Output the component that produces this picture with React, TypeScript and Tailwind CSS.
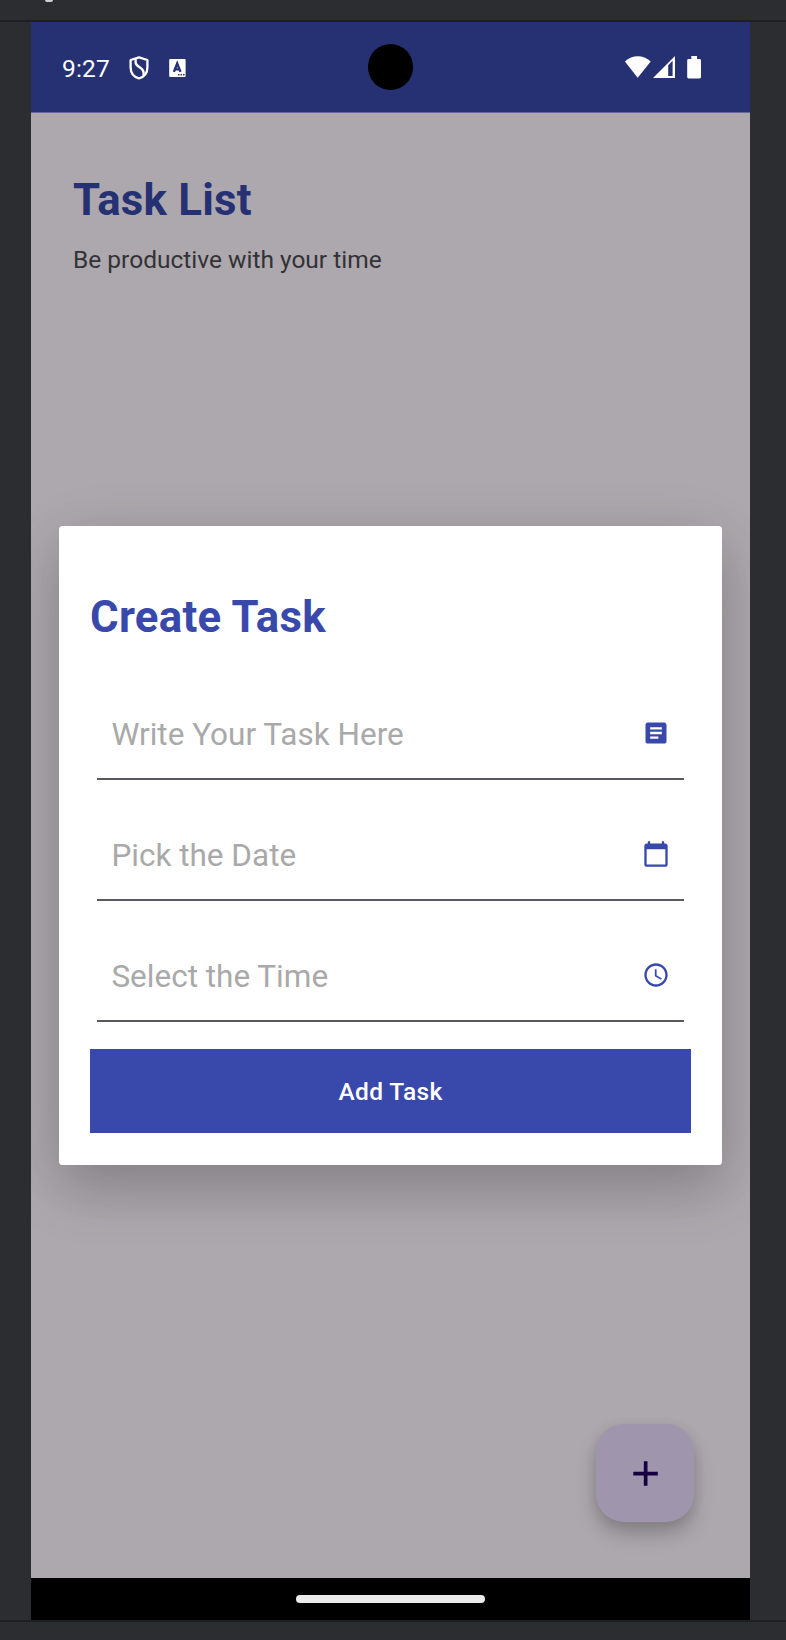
import type { ReactNode } from "react";

function ShieldIcon() {
  return (
    <svg className="absolute top-[34px] left-[98px]" width="20" height="24" viewBox="0 0 20 24" fill="none" stroke="#fff" strokeWidth="2.3">
      <path d="M10 1.4 L18.4 4 V11.2 C18.4 17.2 14.8 21 10 22.4 C5.2 21 1.6 17.2 1.6 11.2 V4 Z" strokeLinejoin="round" />
      <path d="M6.6 3 V6.2 C6.6 11.6 14.6 11 14.6 16.4 V19.4" />
    </svg>
  );
}

function KeyboardIcon() {
  return (
    <svg className="absolute top-[37px] left-[138px]" width="17" height="18" viewBox="0 0 17 18">
      <rect x="0.2" y="0" width="16.4" height="18" rx="1" fill="#fff" />
      <path d="M4.9 12.9 L8.2 4.6 L11.5 12.9 M6 10.4 H10.4" fill="none" stroke="#263173" strokeWidth="2.4" />
      <path d="M9 15.8 H10.5 M11.5 15.8 H13 M14 15.8 H15.5" stroke="#263173" strokeWidth="1.4" />
    </svg>
  );
}

function StatusBar() {
  return (
    <header className="relative h-[91px] shrink-0 border-b border-[#67669b] bg-[#263173] text-white">
      <span className="absolute top-[32px] left-[31px] text-[24.5px] leading-[29px] tracking-[0.2px] whitespace-nowrap">9:27</span>
      <ShieldIcon />
      <KeyboardIcon />
      <div className="absolute top-[22.2px] left-[337px] size-[45.4px] rounded-full bg-black" />
      <svg className="absolute top-[33px] left-[593px]" width="80" height="25" viewBox="0 0 80 25">
        <path d="M13.7 22.8 L0.9 6.5 C8.2 -0.5 19.2 -0.5 26.7 6.5 Z" fill="#fff" />
        <path d="M29 23 L51 1 V23 Z" fill="#fff" />
        <path d="M44.2 10.2 L48.6 5.8 V20.9 H44.2 Z" fill="#263173" />
        <path d="M67.3 1 H73 V4 H75.6 Q77 4 77 5.4 V22.1 Q77 23.5 75.6 23.5 H64.6 Q63.2 23.5 63.2 22.1 V5.4 Q63.2 4 64.6 4 H67.3 Z" fill="#fff" />
      </svg>
    </header>
  );
}

function FieldIcon({ d }: { d: string }) {
  return (
    <svg width="28" height="28" viewBox="0 0 24 24" fill="#3949ab">
      <path d={d} />
    </svg>
  );
}

const ARTICLE =
  "M19 3H5c-1.1 0-2 .9-2 2v14c0 1.1.9 2 2 2h14c1.1 0 2-.9 2-2V5c0-1.1-.9-2-2-2zm-5 14H7v-2h7v2zm3-4H7v-2h10v2zm0-4H7V7h10v2z";
const CALENDAR =
  "M20 3h-1V1h-2v2H7V1H5v2H4c-1.1 0-2 .9-2 2v16c0 1.1.9 2 2 2h16c1.1 0 2-.9 2-2V5c0-1.1-.9-2-2-2zm0 18H4V8h16v13z";
const CLOCK =
  "M11.99 2C6.47 2 2 6.48 2 12s4.47 10 9.99 10C17.52 22 22 17.52 22 12S17.52 2 11.99 2zM12 20c-4.42 0-8-3.58-8-8s3.58-8 8-8 8 3.58 8 8-3.58 8-8 8zm.5-13H11v6l5.25 3.15.75-1.23-4.5-2.67z";

function Field({ label, children }: { label: string; children: ReactNode }) {
  return (
    <div className="mx-[7px] flex h-[121px] items-end justify-between border-b-2 border-[#5c5861] pr-[14.5px] pl-[14.4px]">
      <span className="pb-[24.5px] text-[31.5px] leading-[38px] whitespace-nowrap text-[#a9a9a9]">{label}</span>
      <span className="pb-[31.5px]">{children}</span>
    </div>
  );
}

function TaskDialog() {
  return (
    <section className="absolute top-[504px] left-[28px] h-[638.5px] w-[663px] rounded-[3.5px] bg-white px-[31px] shadow-[0_26px_56px_rgba(0,0,0,0.19),0_6px_64px_rgba(0,0,0,0.07)]">
      <h2 className="pt-[65px] text-[43.75px] leading-[52px] font-bold tracking-[0.3px] text-[#3949ab]">Create Task</h2>
      <div className="mt-[16px]">
        <Field label="Write Your Task Here">
          <FieldIcon d={ARTICLE} />
        </Field>
        <Field label="Pick the Date">
          <FieldIcon d={CALENDAR} />
        </Field>
        <Field label="Select the Time">
          <FieldIcon d={CLOCK} />
        </Field>
      </div>
      <button className="mt-[27px] flex h-[84px] w-[601px] items-center justify-center bg-[#3949ab] pt-[3px] text-[24.5px] font-medium tracking-[0.35px] text-white">
        Add Task
      </button>
    </section>
  );
}

export default function App() {
  return (
    <div className="flex h-[1640px] w-[786px] flex-col overflow-hidden bg-[#2b2d30] font-[Roboto,sans-serif]">
      <div className="h-[22px] shrink-0 border-b-2 border-[#1e1f22] pl-[45px]">
        <div className="h-[2px] w-[8px] rounded-b-full bg-[#ced0d6]" />
      </div>
      <div className="relative ml-[31px] flex h-[1598px] w-[719px] shrink-0 flex-col overflow-hidden bg-[#ada8ad]">
        <StatusBar />
        <main className="flex-1 pl-[42px]">
          <h1 className="pt-[61px] text-[43.75px] leading-[52px] font-bold tracking-[0.25px] text-[#263173]">Task List</h1>
          <p className="mt-[19px] text-[24.5px] leading-[29px] text-[#333236]">Be productive with your time</p>
        </main>
        <TaskDialog />
        <button
          aria-label="Add"
          className="absolute top-[1402px] left-[565px] flex size-[98px] items-center justify-center rounded-[28px] bg-[#9f96ad] shadow-[0_12px_20px_rgba(0,0,0,0.22),0_2px_12px_rgba(0,0,0,0.07)]"
        >
          <svg width="25" height="25" viewBox="0 0 25 25" fill="#16003f">
            <path d="M10.8 0.3h3.7v10.5h10.3v3.7H14.5v10.3h-3.7V14.5H0.3v-3.7h10.5z" />
          </svg>
        </button>
        <nav className="flex h-[42px] shrink-0 items-start justify-center bg-black pt-[17.3px]">
          <div className="h-[7.5px] w-[189px] rounded-full bg-[#ebebeb]" />
        </nav>
      </div>
      <div className="h-[2px] shrink-0 bg-[#1e1f22]" />
    </div>
  );
}
